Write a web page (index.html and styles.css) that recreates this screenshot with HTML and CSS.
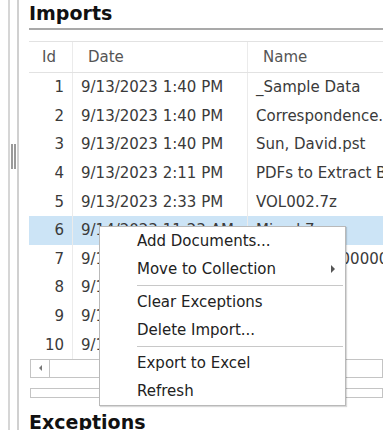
FILE: index.html
```html
<!DOCTYPE html>
<html lang="en">

<head>
  <meta charset="UTF-8">
  <meta name="viewport" content="width=device-width, initial-scale=1.0">
  <title>Imports</title>
  <link rel="stylesheet" href="styles.css">
</head>

<body>

  <div class="layout">
    <div class="edge"></div>
    <div class="splitter">
      <div class="grip"></div>
    </div>

    <div class="pane">
      <h2 class="section-title underlined">Imports</h2>

      <div class="grid">
        <div class="grid-row grid-head">
          <div class="cell col-id">Id</div>
          <div class="cell col-date">Date</div>
          <div class="cell col-name">Name</div>
        </div>
        <div class="grid-row">
          <div class="cell col-id">1</div>
          <div class="cell col-date">9/13/2023 1:40 PM</div>
          <div class="cell col-name">_Sample Data</div>
        </div>
        <div class="grid-row">
          <div class="cell col-id">2</div>
          <div class="cell col-date">9/13/2023 1:40 PM</div>
          <div class="cell col-name">Correspondence.pst</div>
        </div>
        <div class="grid-row">
          <div class="cell col-id">3</div>
          <div class="cell col-date">9/13/2023 1:40 PM</div>
          <div class="cell col-name">Sun, David.pst</div>
        </div>
        <div class="grid-row">
          <div class="cell col-id">4</div>
          <div class="cell col-date">9/13/2023 2:11 PM</div>
          <div class="cell col-name">PDFs to Extract Bates</div>
        </div>
        <div class="grid-row">
          <div class="cell col-id">5</div>
          <div class="cell col-date">9/13/2023 2:33 PM</div>
          <div class="cell col-name">VOL002.7z</div>
        </div>
        <div class="grid-row selected">
          <div class="cell col-id">6</div>
          <div class="cell col-date">9/14/2023 11:23 AM</div>
          <div class="cell col-name">Mixed.7z</div>
        </div>
        <div class="grid-row">
          <div class="cell col-id">7</div>
          <div class="cell col-date">9/14/2023 11:40 AM</div>
          <div class="cell col-name">Production 00000001.zip</div>
        </div>
        <div class="grid-row">
          <div class="cell col-id">8</div>
          <div class="cell col-date">9/14/2023 1:02 PM</div>
          <div class="cell col-name">Emails.zip</div>
        </div>
        <div class="grid-row">
          <div class="cell col-id">9</div>
          <div class="cell col-date">9/14/2023 1:15 PM</div>
          <div class="cell col-name">Scans.zip</div>
        </div>
        <div class="grid-row">
          <div class="cell col-id">10</div>
          <div class="cell col-date">9/14/2023 2:48 PM</div>
          <div class="cell col-name">Misc.zip</div>
        </div>
      </div>

      <div class="hscroll">
        <div class="hscroll-btn"><span class="arrow-left"></span></div>
        <div class="hscroll-thumb"></div>
      </div>

      <div class="pager"></div>

      <h2 class="section-title">Exceptions</h2>
    </div>
  </div>

  <!-- context menu over the selected row -->
  <div class="context-menu">
    <div class="menu-item">Add Documents...</div>
    <div class="menu-item">Move to Collection <span class="submenu-arrow"></span></div>
    <div class="menu-sep"></div>
    <div class="menu-item">Clear Exceptions</div>
    <div class="menu-item">Delete Import...</div>
    <div class="menu-sep"></div>
    <div class="menu-item">Export to Excel</div>
    <div class="menu-item">Refresh</div>
  </div>

</body>

</html>
```

FILE: styles.css
```css
body {
  margin: 0;
  font-family: 'DejaVu Sans', 'Verdana', sans-serif;
  font-size: 15px;
  color: #3a3a3a;
  background-color: #fff;
}

.layout {
  display: flex;
  height: 430px;
  overflow: hidden;
}

.edge {
  width: 8px;
  flex-shrink: 0;
}

.splitter {
  width: 7px;
  flex-shrink: 0;
  border-left: 2px solid #d6d6d6;
  border-right: 2px solid #d0d0d0;
}

.grip {
  width: 1px;
  height: 25px;
  margin-top: 144px;
  margin-left: 1px;
  border-left: 2px solid #9a9a9a;
  border-right: 2px solid #9a9a9a;
}

.pane {
  flex: 1;
  min-width: 0;
  padding-left: 10px;
  overflow: hidden;
}

.section-title {
  margin: 0;
  padding-top: 2px;
  font-size: 19px;
  font-weight: bold;
  line-height: 22px;
  color: #111;
  white-space: nowrap;
}

.underlined {
  padding-bottom: 4px;
  border-bottom: 2px solid #a9a9a9;
  margin-bottom: 11px;
}

.grid {
  width: 600px;
}

.grid-row {
  display: flex;
  height: 28.6px;
}

.grid-head {
  height: 30px;
  border-top: 1px solid #e2e2e2;
  border-bottom: 1px solid #e2e2e2;
  color: #555;
}

.cell {
  display: flex;
  align-items: center;
  white-space: nowrap;
  overflow: hidden;
  border-right: 1px solid #ebebeb;
  padding: 0 8px;
  box-sizing: border-box;
}

.grid-head .cell {
  padding: 0 15px;
}

.col-id {
  width: 44px;
  justify-content: flex-end;
}

.grid-head .col-id {
  padding-right: 16px;
}

.col-date {
  width: 175px;
}

.col-name {
  width: 381px;
}

.grid-row.selected {
  background-color: #cce4f6;
}

.hscroll {
  display: flex;
  height: 17px;
  margin-left: 1px;
  border: 1px solid #c4c4c4;
}

.hscroll-btn {
  width: 18px;
  border-right: 1px solid #c4c4c4;
  display: flex;
  align-items: center;
  justify-content: center;
}

.arrow-left {
  width: 0;
  height: 0;
  border-top: 3px solid transparent;
  border-bottom: 3px solid transparent;
  border-right: 3px solid #777;
}

.hscroll-thumb {
  flex: 1;
  background-color: #fff;
}

.pager {
  height: 8px;
  margin-top: 10px;
  margin-left: 1px;
  border: 1px solid #c4c4c4;
}

.pager + .section-title {
  margin-top: 11px;
}

.context-menu {
  position: absolute;
  left: 99px;
  top: 226px;
  width: 245px;
  border: 1px solid #b9b9b9;
  background-color: #fff;
  box-shadow: 1px 1px 1px rgba(0, 0, 0, 0.15);
  color: #222;
}

.menu-item {
  position: relative;
  height: 28px;
  line-height: 28px;
  padding-left: 37px;
  white-space: nowrap;
}

.submenu-arrow {
  position: absolute;
  right: 10px;
  top: 10px;
  width: 0;
  height: 0;
  border-top: 4px solid transparent;
  border-bottom: 4px solid transparent;
  border-left: 4px solid #555;
}

.menu-sep {
  height: 1px;
  margin: 2px 2px 2px 37px;
  background-color: #c8c8c8;
}
```
